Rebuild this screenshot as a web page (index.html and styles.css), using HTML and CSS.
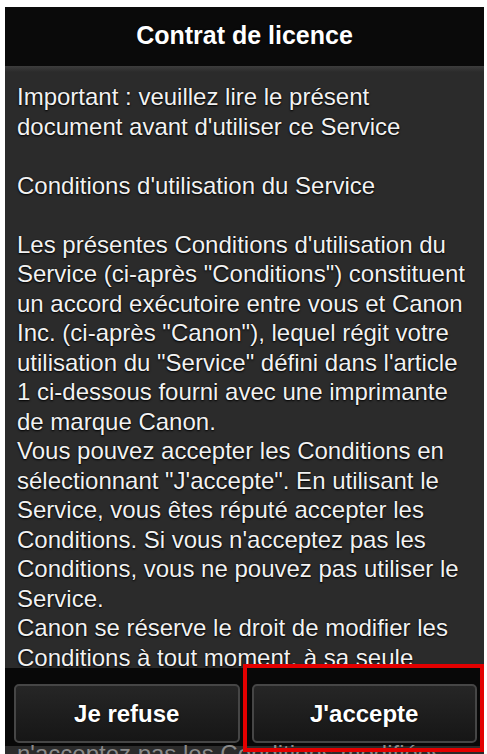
FILE: index.html
```html
<!DOCTYPE html>
<html lang="fr">
<head>
<meta charset="utf-8">
<title>Contrat de licence</title>
<link rel="stylesheet" href="styles.css">
</head>
<body>
<div class="panel">
  <div class="header">Contrat de licence</div>
  <div class="content">
    <p class="gap">Important : veuillez lire le présent document avant d'utiliser ce Service</p>
    <p class="gap">Conditions d'utilisation du Service</p>
    <p>Les présentes Conditions d'utilisation du Service (ci-après "Conditions") constituent un accord exécutoire entre vous et Canon Inc. (ci-après "Canon"), lequel régit votre utilisation du "Service" défini dans l'article 1 ci-dessous fourni avec une imprimante de marque Canon.</p>
    <p>Vous pouvez accepter les Conditions en sélectionnant "J'accepte". En utilisant le Service, vous êtes réputé accepter les Conditions. Si vous n'acceptez pas les Conditions, vous ne pouvez pas utiliser le Service.</p>
    <p>Canon se réserve le droit de modifier les Conditions à tout moment, à sa seule</p>
  </div>
  <div class="footer">
    <button class="btn" type="button">Je refuse</button>
    <button class="btn" type="button">J'accepte</button>
  </div>
  <div class="tail">n'acceptez pas les Conditions modifiées</div>
  <div class="highlight"></div>
</div>
</body>
</html>
```

FILE: styles.css
```css
html, body {
  margin: 0;
  padding: 0;
  background: #ffffff;
  height: 754px;
  overflow: hidden;
}

.panel {
  position: relative;
  margin: 7px 3px 0 5px;
  width: 479px;
  height: 747px;
  background: #2b2b2b;
  overflow: hidden;
  font-family: "Liberation Sans", Arial, Helvetica, sans-serif;
  color: #f2f2f2;
}

.header {
  height: 59px;
  line-height: 56px;
  text-align: center;
  background: #0a0a0a;
  font-size: 25px;
  font-weight: bold;
  color: #ffffff;
  text-shadow: 0 0 2px rgba(0, 0, 0, 0.9);
}

.content {
  height: 586px;
  padding: 16px 12px 0 12px;
  overflow: hidden;
  background: linear-gradient(#3d3d3d, #2b2b2b 6px);
  font-size: 24px;
  line-height: 29.5px;
  text-shadow: 0 1px 2px #000000, 0 0 1px #000000;
}

.content p {
  margin: 0;
}

.content p.gap {
  margin-bottom: 29.5px;
}

.footer {
  height: 78px;
  box-sizing: border-box;
  padding: 16px 7px 0 9px;
  background: #080808;
  display: flex;
  gap: 12px;
}

.btn {
  flex: 1;
  height: 59px;
  margin: 0;
  border: 2px solid #464646;
  border-radius: 5px;
  background: linear-gradient(#262626, #161616);
  font-family: "Liberation Sans", Arial, Helvetica, sans-serif;
  font-size: 24px;
  font-weight: bold;
  color: #ffffff;
  text-shadow: 0 0 2px #000000;
  padding: 0;
}

.tail {
  padding: 0 12px;
  font-size: 24px;
  line-height: 16px;
  color: #8a8a8a;
  white-space: nowrap;
}

.highlight {
  position: absolute;
  left: 238px;
  top: 657px;
  width: 233px;
  height: 80px;
  border: 4px solid #e30000;
}
```
